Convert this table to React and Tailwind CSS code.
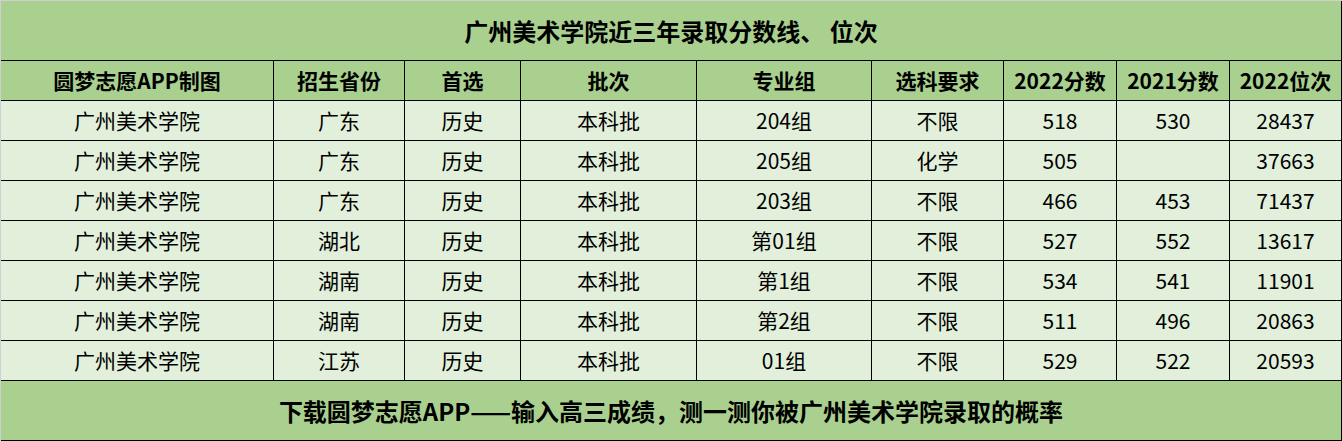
const cols = ['w-[273px]', 'w-[131px]', 'w-[116px]', 'w-[176px]', 'w-[175px]', 'w-[132px]', 'w-[113px]', 'w-[113px]', 'w-[112px]'];

const headers = ['圆梦志愿APP制图', '招生省份', '首选', '批次', '专业组', '选科要求', '2022分数', '2021分数', '2022位次'];

const rows = [
    ['广州美术学院', '广东', '历史', '本科批', '204组', '不限', '518', '530', '28437'],
    ['广州美术学院', '广东', '历史', '本科批', '205组', '化学', '505', '', '37663'],
    ['广州美术学院', '广东', '历史', '本科批', '203组', '不限', '466', '453', '71437'],
    ['广州美术学院', '湖北', '历史', '本科批', '第01组', '不限', '527', '552', '13617'],
    ['广州美术学院', '湖南', '历史', '本科批', '第1组', '不限', '534', '541', '11901'],
    ['广州美术学院', '湖南', '历史', '本科批', '第2组', '不限', '511', '496', '20863'],
    ['广州美术学院', '江苏', '历史', '本科批', '01组', '不限', '529', '522', '20593']
];

function Row({ cells, header }) {
    return (
        <div className={`flex h-[40px] ${header ? 'bg-[#a9d08e] font-bold' : 'bg-[#e2efda]'}`}>
            {cells.map((text, i) => (
                <div
                    key={i}
                    className={`${cols[i]} flex shrink-0 items-center justify-center border-b border-r border-black pt-[1px]`}
                >
                    {text}
                </div>
            ))}
        </div>
    );
}

export default function App() {
    return (
        <div
            className="w-[1342px] border-l border-t border-[#d0d0d0] text-[21px] text-black"
            style={{ fontFamily: '"Noto Sans CJK SC", "Noto Sans", sans-serif' }}
        >
            <div className="flex h-[60px] items-center justify-center border-b border-r border-black bg-[#a9d08e] text-[24px] font-bold">
                广州美术学院近三年录取分数线、 位次
            </div>
            <Row cells={headers} header />
            {rows.map((r, i) => (
                <Row key={i} cells={r} />
            ))}
            <div className="flex h-[60px] items-center justify-center border-b border-r border-black bg-[#a9d08e] text-[24px] font-bold">
                下载圆梦志愿APP——输入高三成绩，测一测你被广州美术学院录取的概率
            </div>
        </div>
    );
}
